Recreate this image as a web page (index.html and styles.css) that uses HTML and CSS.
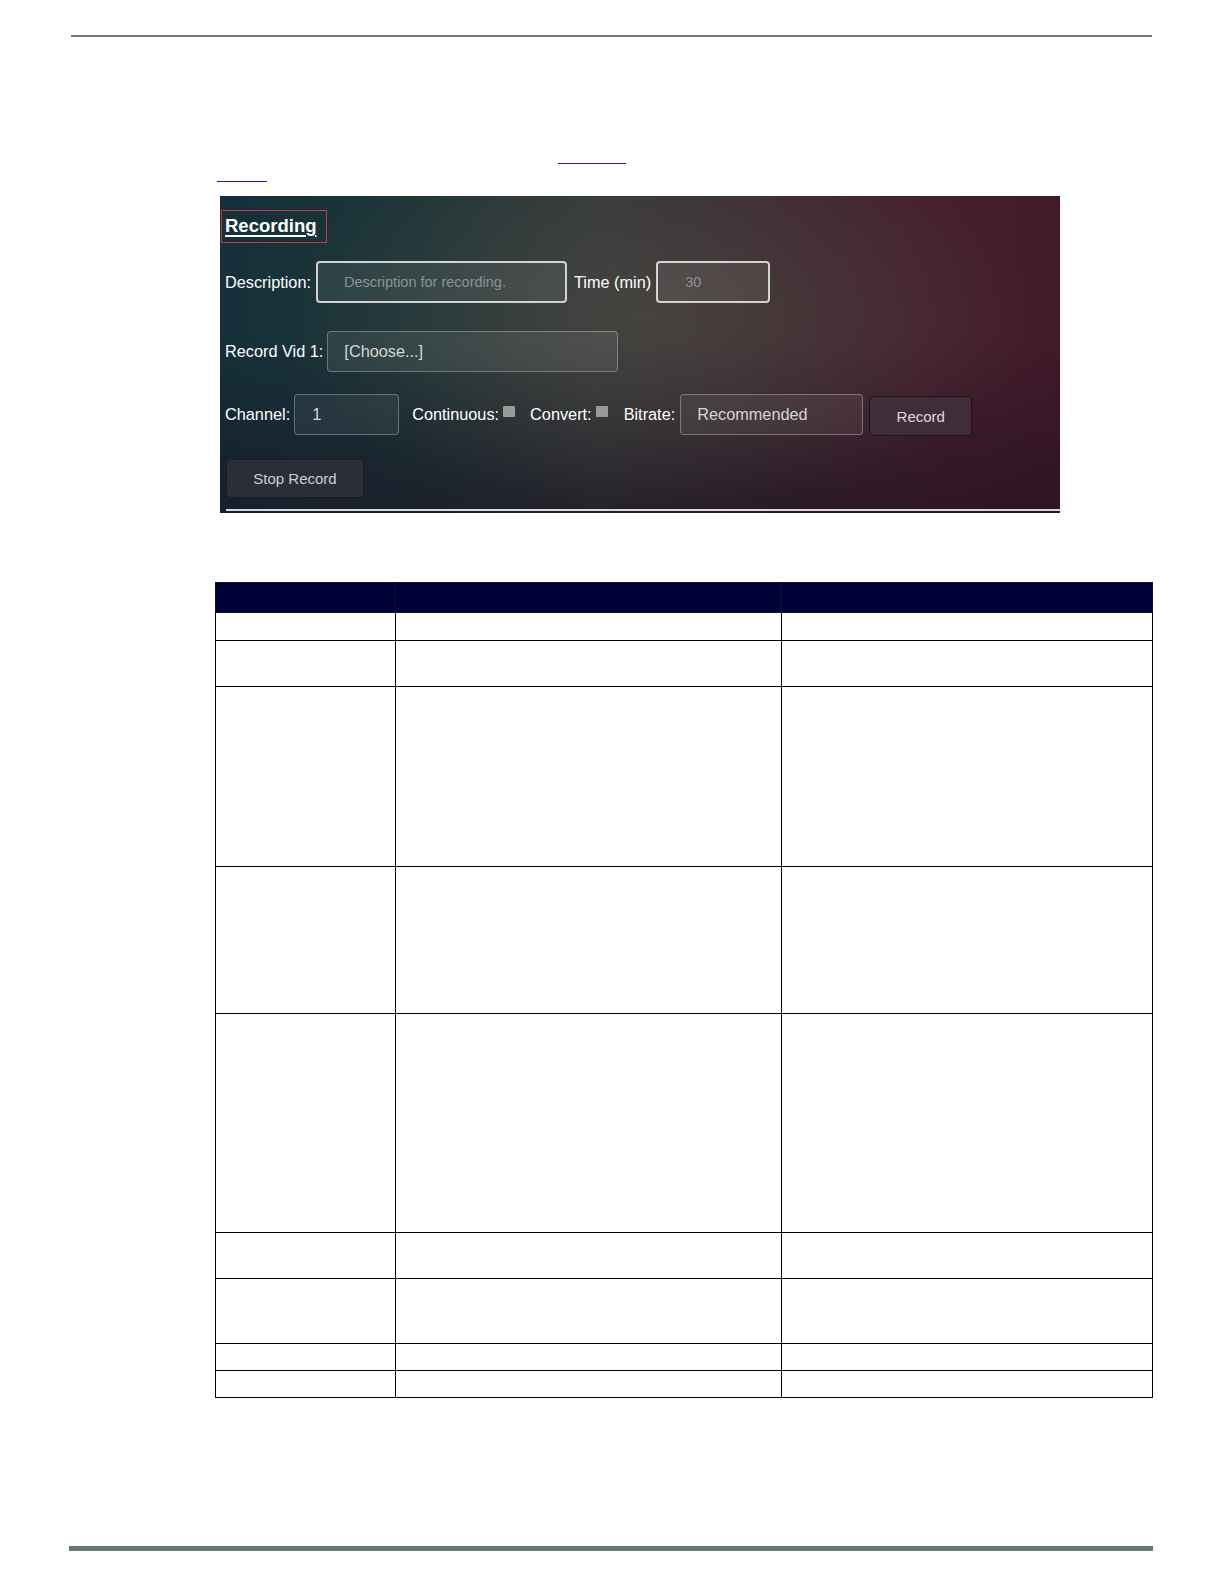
FILE: index.html
```html
<!DOCTYPE html>
<html lang="en">
<head>
<meta charset="utf-8">
<title>Recording</title>
<link rel="stylesheet" href="styles.css">
</head>
<body>
<div class="page">
  <div class="rule-top"></div>

  <div class="intro">
    <div class="intro-line"><span class="link link-a"></span></div>
    <div class="intro-line"><span class="link link-b"></span></div>
  </div>

  <div class="panel">
    <div class="panel-title"><span>Recording</span></div>

    <div class="row row-1">
      <span class="lbl">Description:</span>
      <div class="field field-desc ph">Description for recording.</div>
      <span class="lbl lbl-time">Time (min)</span>
      <div class="field field-time ph">30</div>
    </div>

    <div class="row row-2">
      <span class="lbl">Record Vid 1:</span>
      <div class="field field-select">[Choose...]</div>
    </div>

    <div class="row row-3">
      <span class="lbl">Channel:</span>
      <div class="field field-chan">1</div>
      <span class="lbl lbl-cont">Continuous:</span>
      <span class="check"></span>
      <span class="lbl lbl-conv">Convert:</span>
      <span class="check"></span>
      <span class="lbl lbl-bit">Bitrate:</span>
      <div class="field field-bit">Recommended</div>
      <button class="btn btn-record">Record</button>
    </div>

    <div class="row row-4">
      <button class="btn btn-stop">Stop Record</button>
    </div>

    <div class="panel-line"></div>
  </div>

  <table class="spec">
    <thead>
      <tr class="h-head"><th class="c1"></th><th class="c2"></th><th class="c3"></th></tr>
    </thead>
    <tbody>
      <tr class="h28"><td></td><td></td><td></td></tr>
      <tr class="h46"><td></td><td></td><td></td></tr>
      <tr class="h180"><td></td><td></td><td></td></tr>
      <tr class="h147"><td></td><td></td><td></td></tr>
      <tr class="h219"><td></td><td></td><td></td></tr>
      <tr class="h46"><td></td><td></td><td></td></tr>
      <tr class="h65"><td></td><td></td><td></td></tr>
      <tr class="h27"><td></td><td></td><td></td></tr>
      <tr class="h27"><td></td><td></td><td></td></tr>
    </tbody>
  </table>

  <div class="rule-bottom"></div>
</div>
</body>
</html>
```

FILE: styles.css
```css
* { box-sizing: border-box; }

html, body {
  margin: 0;
  padding: 0;
  background: #ffffff;
  font-family: "Liberation Sans", Arial, sans-serif;
}

.page {
  width: 1224px;
  padding-top: 35px;
  display: flex;
  flex-direction: column;
}

.rule-top {
  margin-left: 71px;
  width: 1081px;
  height: 2px;
  background: #6b7f79;
}

.intro {
  margin-top: 109px;
  margin-left: 217px;
  display: flex;
  flex-direction: column;
}

.intro-line {
  height: 18px;
  display: flex;
}

.link {
  display: inline-block;
  height: 18px;
  border-bottom: 1.5px solid #1b1b9c;
}

.link-a { margin-left: 341px; width: 68px; }
.link-b { width: 50px; }

.panel {
  margin-top: 14px;
  margin-left: 220px;
  width: 840px;
  height: 317px;
  padding: 14px 0 0 1px;
  display: flex;
  flex-direction: column;
  color: #ffffff;
  background:
    radial-gradient(ellipse 45% 60% at 52% 38%, rgba(85, 80, 74, 0.5), rgba(85, 80, 74, 0) 100%),
    linear-gradient(to bottom, rgba(20, 10, 28, 0) 45%, rgba(22, 12, 30, 0.5) 100%),
    linear-gradient(90deg, #15303a 0%, #1d3538 22%, #343938 45%, #3e2a30 66%, #46202d 84%, #431a2a 100%);
}

.panel-title {
  width: 106px;
  height: 33px;
  border: 1px solid #c23a48;
  padding: 4px 0 0 3px;
  font-size: 18.5px;
  font-weight: bold;
}

.panel-title span {
  text-decoration: underline;
  text-decoration-thickness: 2px;
  text-underline-offset: 3px;
}

.row {
  display: flex;
  align-items: center;
  padding-left: 4px;
  font-size: 16.3px;
}

.row-1 { margin-top: 18px; height: 42px; }
.row-2 { margin-top: 28px; height: 41px; }
.row-3 { margin-top: 22px; height: 41px; }
.row-4 { margin-top: 24px; height: 39px; padding-left: 5px; }

.lbl {
  color: #ffffff;
  white-space: nowrap;
}

.field {
  display: flex;
  align-items: center;
  height: 100%;
  border-radius: 4px;
  white-space: nowrap;
}

.ph {
  color: #8d9294;
  font-size: 14.5px;
  border: 2px solid #d2d2d2;
  background: rgba(255, 255, 255, 0.07);
}

.field-desc {
  margin-left: 5px;
  width: 251px;
  padding-left: 26px;
}

.lbl-time { margin-left: 7px; }

.field-time {
  margin-left: 5px;
  width: 114px;
  padding-left: 27px;
}

.field-select {
  margin-left: 4px;
  width: 291px;
  padding-left: 16px;
  color: #d6d6d6;
  border: 1px solid rgba(255, 255, 255, 0.28);
  background: rgba(255, 255, 255, 0.07);
}

.field-chan {
  margin-left: 4px;
  width: 105px;
  padding-left: 17px;
  color: #d6d6d6;
  border: 1px solid rgba(255, 255, 255, 0.28);
  background: rgba(255, 255, 255, 0.06);
}

.lbl-cont { margin-left: 13px; }
.lbl-conv { margin-left: 15px; }
.lbl-bit { margin-left: 16px; }

.check {
  display: inline-block;
  width: 12px;
  height: 11px;
  margin-left: 4px;
  margin-bottom: 6px;
  border-radius: 1px;
  background: #9a9a9a;
}

.field-bit {
  margin-left: 5px;
  width: 183px;
  padding-left: 16px;
  color: #d6d6d6;
  border: 1px solid rgba(255, 255, 255, 0.3);
  background: rgba(255, 255, 255, 0.06);
}

.btn {
  font-family: "Liberation Sans", Arial, sans-serif;
  font-size: 15px;
  border-radius: 4px;
  cursor: pointer;
}

.btn-record {
  margin-left: 6px;
  margin-top: 3px;
  width: 103px;
  height: 40px;
  color: #e0d6de;
  background: #3f2e3a;
  border: 1px solid #1e1219;
}

.btn-stop {
  width: 138px;
  height: 39px;
  color: #cfcfcf;
  background: #2b2d37;
  border: 1px solid #1b1c24;
}

.panel-line {
  margin-top: 11px;
  margin-left: 5px;
  height: 2px;
  background: #d9d9d9;
}

.spec {
  margin-top: 69px;
  margin-left: 215px;
  width: 937px;
  border-collapse: collapse;
  table-layout: fixed;
}

.spec th, .spec td {
  padding: 0;
  border: 1.5px solid #000000;
}

.spec th {
  background: #000038;
  border-color: #10102a;
}

.spec .c1 { width: 180px; }
.spec .c2 { width: 386px; }
.spec .c3 { width: 371px; }

.h-head { height: 30px; }
.h27 { height: 27px; }
.h28 { height: 28px; }
.h46 { height: 46px; }
.h65 { height: 65px; }
.h147 { height: 147px; }
.h180 { height: 180px; }
.h219 { height: 219px; }

.rule-bottom {
  margin-top: 148px;
  margin-left: 69px;
  width: 1084px;
  height: 5px;
  background: #647a74;
}
```
